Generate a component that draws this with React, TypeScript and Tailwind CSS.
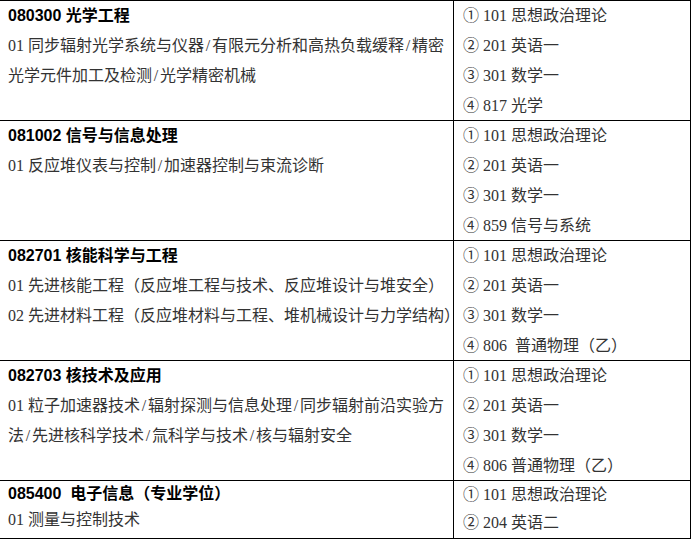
import React from "react";

type Row = {
  title: string;
  lines: string[];
  exams: string[];
  last?: boolean;
};

const ROWS: Row[] = [
  {
    title: "080300 光学工程",
    lines: [
      "01 同步辐射光学系统与仪器/有限元分析和高热负载缓释/精密",
      "光学元件加工及检测/光学精密机械",
    ],
    exams: ["① 101 思想政治理论", "② 201 英语一", "③ 301 数学一", "④ 817 光学"],
  },
  {
    title: "081002 信号与信息处理",
    lines: ["01 反应堆仪表与控制/加速器控制与束流诊断"],
    exams: ["① 101 思想政治理论", "② 201 英语一", "③ 301 数学一", "④ 859 信号与系统"],
  },
  {
    title: "082701 核能科学与工程",
    lines: [
      "01 先进核能工程（反应堆工程与技术、反应堆设计与堆安全）",
      "02 先进材料工程（反应堆材料与工程、堆机械设计与力学结构）",
    ],
    exams: ["① 101 思想政治理论", "② 201 英语一", "③ 301 数学一", "④ 806\u00a0 普通物理（乙）"],
  },
  {
    title: "082703 核技术及应用",
    lines: [
      "01 粒子加速器技术/辐射探测与信息处理/同步辐射前沿实验方",
      "法/先进核科学技术/氚科学与技术/核与辐射安全",
    ],
    exams: ["① 101 思想政治理论", "② 201 英语一", "③ 301 数学一", "④ 806 普通物理（乙）"],
  },
  {
    title: "085400\u00a0 电子信息（专业学位）",
    lines: ["01 测量与控制技术"],
    exams: ["① 101 思想政治理论", "② 204 英语二"],
    last: true,
  },
];

const serif = "font-['Liberation_Serif','Noto_Sans_CJK_SC',serif]";
const sans = "font-['Liberation_Sans','Noto_Sans_CJK_SC',sans-serif]";

// slashes in the source are half-width (8px), wider than the latin glyph
function Line({ text }: { text: string }) {
  const parts = text.split("/");
  return (
    <>
      {parts.map((p, i) => (
        <React.Fragment key={i}>
          {i > 0 && <span className="inline-block w-[8px] text-center">/</span>}
          {p}
        </React.Fragment>
      ))}
    </>
  );
}

export default function App() {
  return (
    <div className="bg-white w-[692px] h-[540px]">
      <div className="w-[691px] border-t border-r border-black">
        {ROWS.map((row) => (
          <div
            key={row.title}
            className={`flex border-b border-black ${row.last ? "h-[58px]" : "h-[120px]"}`}
          >
            <div
              className={`w-[454px] shrink-0 border-r border-black pl-2 text-[16px] ${
                row.last ? "leading-[26px]" : "leading-[30px]"
              }`}
            >
              <div className={`${sans} font-bold text-black whitespace-nowrap`}>{row.title}</div>
              {row.lines.map((l) => (
                <div key={l} className={`${serif} text-[#333] whitespace-nowrap`}>
                  <Line text={l} />
                </div>
              ))}
            </div>
            <div
              className={`flex-1 pl-[9px] text-[16px] ${serif} text-[#333] ${
                row.last ? "leading-[28px]" : "leading-[30px]"
              }`}
            >
              {row.exams.map((e) => (
                <div key={e} className="whitespace-nowrap">
                  {e}
                </div>
              ))}
            </div>
          </div>
        ))}
      </div>
    </div>
  );
}
